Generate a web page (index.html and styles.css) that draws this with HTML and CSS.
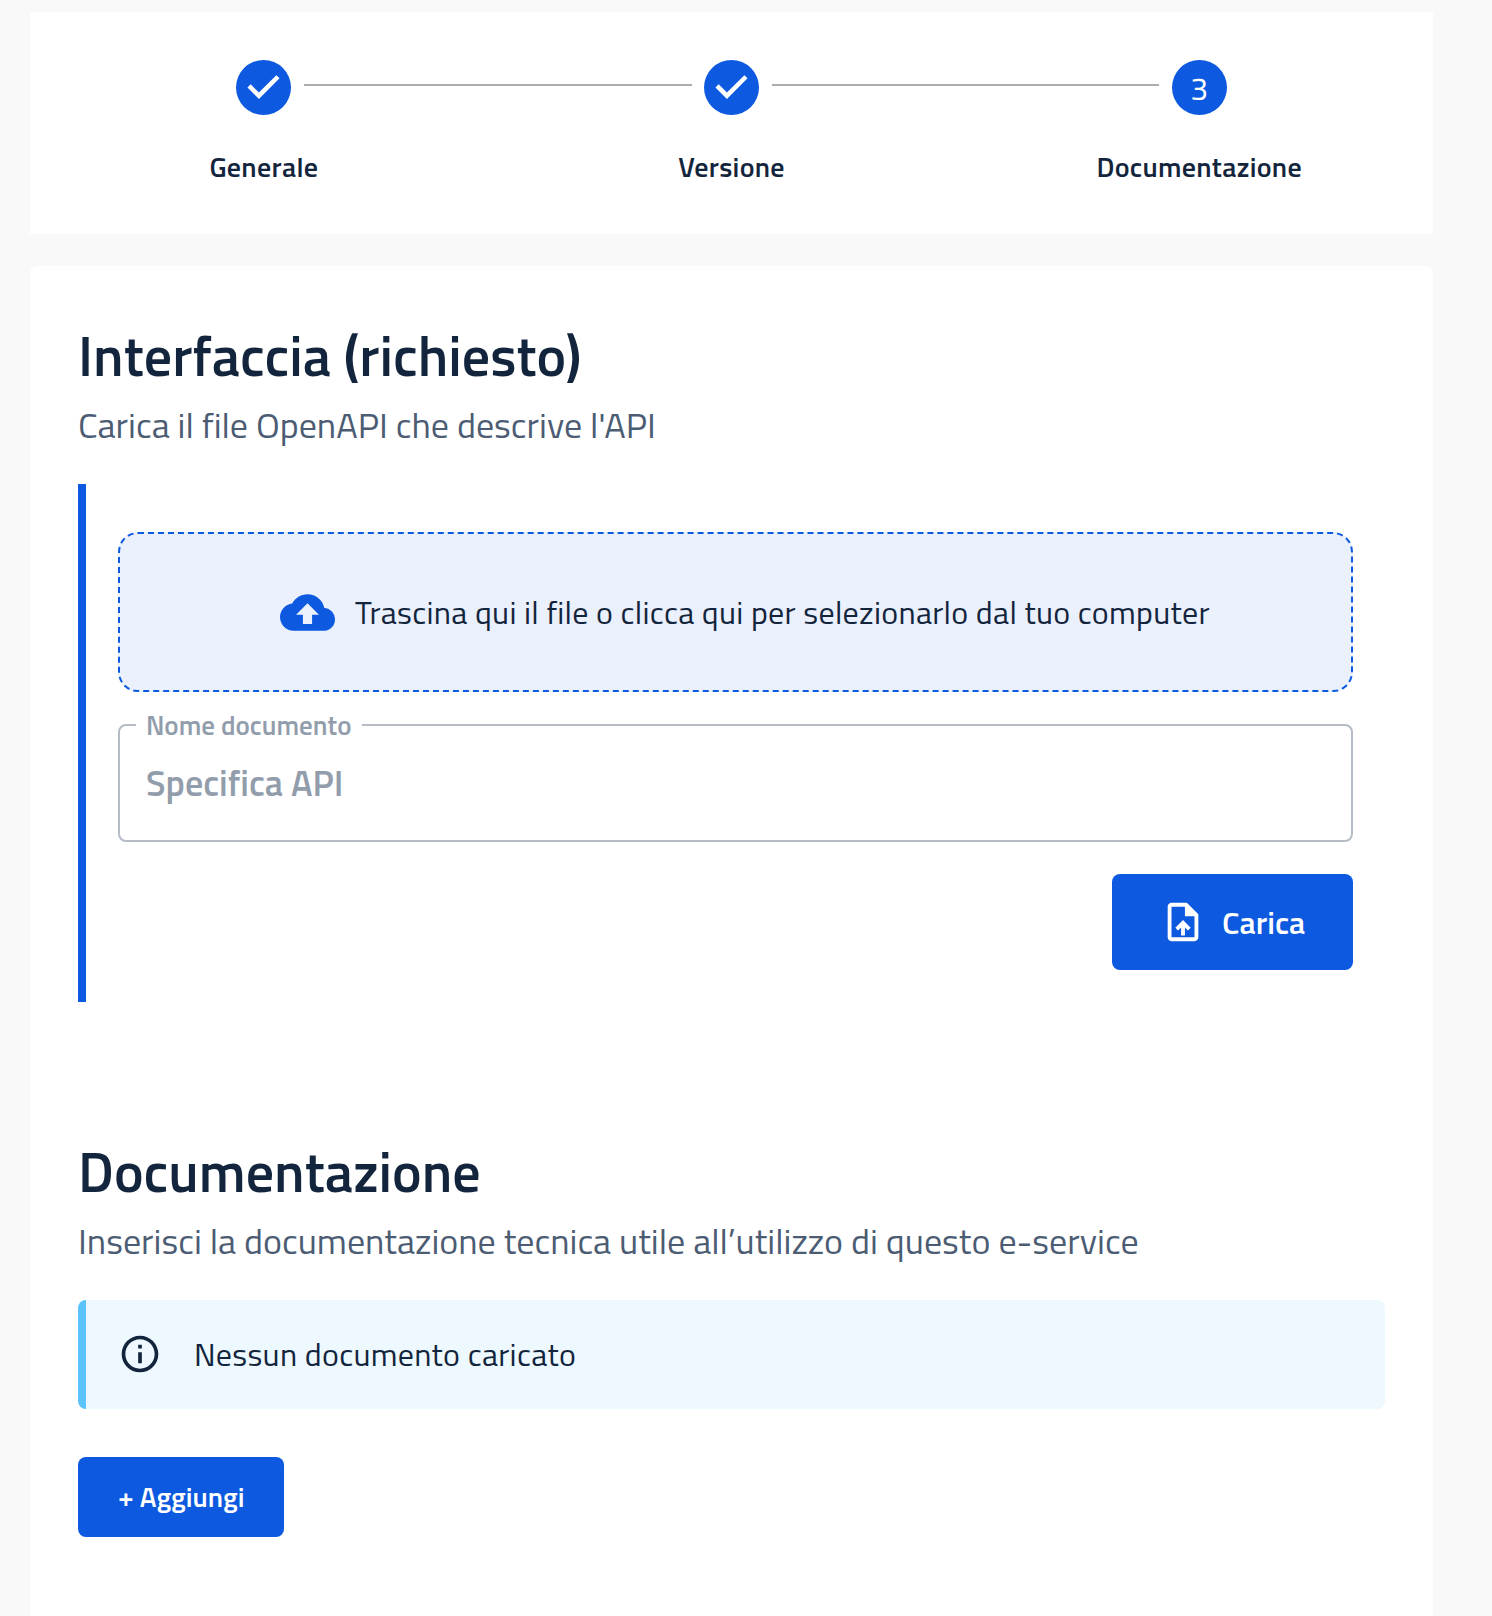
FILE: index.html
```html
<!DOCTYPE html>
<html lang="it">
<head>
<meta charset="utf-8">
<title>Documentazione e-service</title>
<link rel="stylesheet" href="styles.css">
</head>
<body>
<main class="page">
  <ol class="stepper">
    <li class="step">
      <svg class="step-icon" viewBox="0 0 24 24"><path d="M12 0a12 12 0 1 0 0 24 12 12 0 0 0 0-24zm-2 17l-5-5 1.4-1.4 3.6 3.6 7.6-7.6L19 8l-9 9z"/></svg>
      <span class="step-label">Generale</span>
    </li>
    <li class="step">
      <svg class="step-icon" viewBox="0 0 24 24"><path d="M12 0a12 12 0 1 0 0 24 12 12 0 0 0 0-24zm-2 17l-5-5 1.4-1.4 3.6 3.6 7.6-7.6L19 8l-9 9z"/></svg>
      <span class="step-label">Versione</span>
    </li>
    <li class="step">
      <span class="step-icon step-number">3</span>
      <span class="step-label">Documentazione</span>
    </li>
  </ol>

  <div class="card">
    <section class="section">
      <h2 class="title">Interfaccia (richiesto)</h2>
      <p class="subtitle">Carica il file OpenAPI che descrive l'API</p>
      <form class="upload">
        <div class="dropzone">
          <svg class="cloud" viewBox="0 0 24 24"><path d="M19.35 10.04C18.67 6.59 15.64 4 12 4 9.11 4 6.6 5.64 5.35 8.04 2.34 8.36 0 10.91 0 14c0 3.31 2.69 6 6 6h13c2.76 0 5-2.24 5-5 0-2.64-2.05-4.78-4.65-4.96zM14 13v4h-4v-4H7l5-5 5 5h-3z"/></svg>
          <span class="drop-text">Trascina qui il file o clicca qui per selezionarlo dal tuo computer</span>
        </div>
        <div class="field">
          <span class="field-label">Nome documento</span>
          <span class="field-value">Specifica API</span>
        </div>
        <button type="button" class="button button-large">
          <svg class="file-icon" viewBox="0 0 24 24"><path d="M14 2H6c-1.1 0-1.99.9-1.99 2L4 20c0 1.1.89 2 1.99 2H18c1.1 0 2-.9 2-2V8l-6-6zm4 18H6V4h7v5h5v11zM8 15.01l1.41 1.41L11 14.84V19h2v-4.16l1.59 1.59L16 15.01 12.01 11z"/></svg>
          <span>Carica</span>
        </button>
      </form>
    </section>

    <section class="section">
      <h2 class="title">Documentazione</h2>
      <p class="subtitle">Inserisci la documentazione tecnica utile all’utilizzo di questo e-service</p>
      <div class="alert">
        <svg class="info-icon" viewBox="0 0 24 24"><path d="M11 7h2v2h-2zm0 4h2v6h-2zm1-9C6.48 2 2 6.48 2 12s4.48 10 10 10 10-4.48 10-10S17.52 2 12 2zm0 18c-4.41 0-8-3.59-8-8s3.59-8 8-8 8 3.59 8 8-3.59 8-8 8z"/></svg>
        <span class="alert-text">Nessun documento caricato</span>
      </div>
      <button type="button" class="button button-small">+ Aggiungi</button>
    </section>
  </div>
</main>
</body>
</html>
```

FILE: styles.css
```css
* { box-sizing: border-box; }
body {
  margin: 0;
  height: 1616px;
  overflow: hidden;
  background: #f9f9f9;
  color: #13253d;
  font-family: "Titillium Web", Roboto, sans-serif;
  white-space: nowrap;
}
.page {
  display: flex;
  flex-direction: column;
  gap: 32px;
  width: 1403px;
  margin-left: 30px;
  padding-top: 12px;
}
.stepper {
  display: flex;
  height: 222px;
  margin: 0;
  padding: 48px 0 0;
  list-style: none;
  background: #fff;
}
.step {
  position: relative;
  flex: 1;
  display: flex;
  flex-direction: column;
  align-items: center;
}
/* connector to the previous step */
.step + .step::before {
  content: "";
  position: absolute;
  top: 24px;
  left: calc(-50% + 40px);
  right: calc(50% + 40px);
  height: 2px;
  background: #adadad;
}
.step-icon { width: 55px; height: 55px; fill: #0d5ae0; }
.step-number {
  border-radius: 50%;
  background: #0d5ae0;
  color: #fff;
  font-size: 32px;
  line-height: 56px;
  text-align: center;
}
.step-label {
  margin-top: 31px;
  font-size: 28px;
  line-height: 41px;
  font-weight: 600;
  letter-spacing: 0.3px;
}

.card {
  height: 1400px;
  padding: 56px 48px;
  border-radius: 8px;
  background: #fff;
}
.section + .section { margin-top: 136px; }
.title { margin: 0; font-size: 56px; line-height: 67px; font-weight: 600; }
.subtitle { margin: 8px 0 32px; font-size: 36px; line-height: 55px; color: #4b5c73; }
.upload {
  display: flex;
  flex-direction: column;
  gap: 32px;
  height: 518px;
  padding: 48px 32px 32px;
  border-left: 8px solid #0d5ae0;
}
.dropzone {
  display: flex;
  align-items: center;
  gap: 20px;
  height: 160px;
  padding-left: 160px;
  border: 2px dashed #0d5ae0;
  border-radius: 20px;
  background: #eaf0fc;
}
.cloud { width: 55px; height: 55px; fill: #0d5ae0; }
.drop-text { font-size: 32px; line-height: 44px; letter-spacing: 0.3px; }
.field {
  position: relative;
  height: 118px;
  padding: 29px 26px;
  border: 2px solid #b5bcc6;
  border-radius: 8px;
  color: #929dac;
  font-weight: 600;
}
.field-label {
  position: absolute;
  top: -22px;
  left: 16px;
  width: 226px;
  padding-left: 10px;
  background: #fff;
  font-size: 27px;
  line-height: 41px;
}
.field-value { display: block; font-size: 36px; line-height: 55px; }
.button {
  display: flex;
  align-items: center;
  padding: 0;
  border: 0;
  border-radius: 8px;
  background: #0d5ae0;
  color: #fff;
  font-family: inherit;
  font-weight: 600;
}
.button-large {
  align-self: flex-end;
  flex: none;
  width: 241px;
  height: 96px;
  padding-left: 48px;
  gap: 16px;
  font-size: 32px;
}
.file-icon { width: 46px; height: 46px; fill: #fff; }
.alert {
  display: flex;
  align-items: center;
  gap: 32px;
  height: 109px;
  padding: 0 0 1px 32px;
  border-left: 8px solid #5cc4fd;
  border-radius: 8px;
  background: #edf9fe;
}
.info-icon { width: 44px; height: 44px; fill: #13253d; }
.alert-text { font-size: 32px; line-height: 44px; letter-spacing: 0.3px; }
.button-small {
  width: 206px;
  height: 80px;
  margin-top: 48px;
  padding: 0 0 1px 40px;
  font-size: 28px;
}
```
